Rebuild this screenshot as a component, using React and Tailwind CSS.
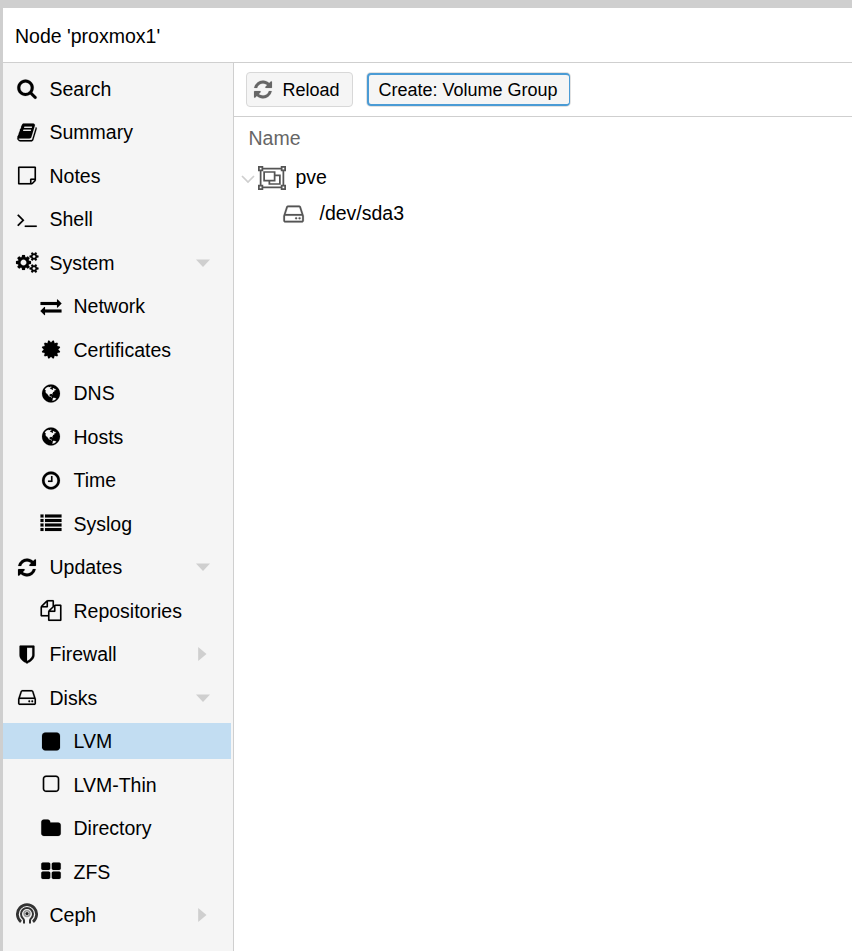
import React from 'react';

const box = (x, y, w, h) => `M${x} ${y}h${w}v${h}h-${w}z`;

const paths = {
  search: 'M1216 832q0-185-131.5-316.5t-316.5-131.5-316.5 131.5-131.5 316.5 131.5 316.5 316.5 131.5 316.5-131.5 131.5-316.5zm512 832q0 52-38 90t-90 38q-54 0-90-38l-343-342q-179 124-399 124-143 0-273.5-55.5t-225-150-150-225-55.5-273.5 55.5-273.5 150-225 225-150 273.5-55.5 273.5 55.5 225 150 150 225 55.5 273.5q0 220-124 399l343 343q37 37 37 90z',
  book: 'M1703 478q40 57 18 129l-275 906q-19 64-76.5 107.5t-122.5 43.5h-923q-77 0-148.5-53.5t-99.5-131.5q-24-67-2-127 0-4 3-27t4-37q1-8-3-21.5t-3-19.5q2-11 8-21t16.5-23.5 16.5-23.5q23-38 45-91.5t30-91.5q3-10 .5-30t-.5-28q3-11 17-28t17-23q21-36 42-92t25-90q1-9-2.5-32t.5-28q4-13 22-30.5t22-22.5q19-26 42.5-84.5t27.5-96.5q1-8-3-25.5t-2-26.5q2-8 9-18t18-23 17-21q8-12 16.5-30.5t15-35 16-36 19.5-32 26.5-23.5 36-11.5 47.5 5.5l-1 3q38-9 51-9h761q74 0 114 56t18 130l-274 906q-36 119-71.5 153.5t-128.5 34.5h-869q-27 0-38 15-11 16-1 43 24 70 144 70h923q29 0 56-15.5t35-41.5l300-987q7-22 5-57 38 15 59 43zm-1064 2q-4 13 2 22.5t20 9.5h608q13 0 25.5-9.5t16.5-22.5l21-64q4-13-2-22.5t-20-9.5h-608q-13 0-25.5 9.5t-16.5 22.5zm-83 256q-4 13 2 22.5t20 9.5h608q13 0 25.5-9.5t16.5-22.5l21-64q4-13-2-22.5t-20-9.5h-608q-13 0-25.5 9.5t-16.5 22.5z',
  note: 'M1528 1280h-248v248q29-10 41-22l185-185q12-12 22-41zm-280-128h288v-896h-1280v1280h896v-288q0-40 28-68t68-28zm416-928v1024q0 40-20 88t-48 76l-184 184q-28 28-76 48t-88 20h-1024q-40 0-68-28t-28-68v-1344q0-40 28-68t68-28h1344q40 0 68 28t28 68z',
  terminal: 'M649 983l-466 466q-10 10-23 10t-23-10l-50-50q-10-10-10-23t10-23l393-393-393-393q-10-10-10-23t10-23l50-50q10-10 23-10t23 10l466 466q10 10 10 23t-10 23zm1079 457v64q0 14-9 23t-23 9h-960q-14 0-23-9t-9-23v-64q0-14 9-23t23-9h960q14 0 23 9t9 23z',
  cogs: 'M896 896q0-106-75-181t-181-75-181 75-75 181 75 181 181 75 181-75 75-181zm768 512q0-52-38-90t-90-38-90 38-38 90q0 53 37.5 90.5t90.5 37.5 90.5-37.5 37.5-90.5zm0-1024q0-52-38-90t-90-38-90 38-38 90q0 53 37.5 90.5t90.5 37.5 90.5-37.5 37.5-90.5zm-384 421v185q0 10-7 19.5t-16 10.5l-155 24q-11 35-32 76 34 48 90 115 7 11 7 20 0 12-7 19-23 30-82.5 89.5t-78.5 59.5q-11 0-21-7l-115-90q-37 19-77 31-11 108-23 155-7 24-30 24h-186q-11 0-20-7.5t-10-17.5l-23-153q-34-10-75-31l-118 89q-7 7-20 7-11 0-21-8-144-133-144-160 0-9 7-19 10-14 41-53t47-61q-23-44-35-82l-152-24q-10-1-17-9.5t-7-19.5v-185q0-10 7-19.5t16-10.5l155-24q11-35 32-76-34-48-90-115-7-11-7-20 0-12 7-20 22-30 82-89t79-59q11 0 21 7l115 90q34-18 77-32 11-108 23-154 7-24 30-24h186q11 0 20 7.5t10 17.5l23 153q34 10 75 31l118-89q8-7 20-7 11 0 21 8 144 133 144 160 0 8-7 19-12 16-42 54t-45 60q23 48 34 82l152 23q10 2 17 10.5t7 19.5zm640 533v140q0 16-149 31-12 27-30 52 51 113 51 138 0 4-4 7-122 71-124 71-8 0-46-47t-52-68q-20 2-30 2t-30-2q-14 21-52 68t-46 47q-2 0-124-71-4-3-4-7 0-25 51-138-18-25-30-52-149-15-149-31v-140q0-16 149-31 13-29 30-52-51-113-51-138 0-4 4-7 4-2 35-20t59-34 30-16q8 0 46 46.5t52 67.5q20-2 30-2t30 2q51-71 92-112l6-2q4 0 124 70 4 3 4 7 0 25-51 138 17 23 30 52 149 15 149 31zm0-1024v140q0 16-149 31-12 27-30 52 51 113 51 138 0 4-4 7-122 71-124 71-8 0-46-47t-52-68q-20 2-30 2t-30-2q-14 21-52 68t-46 47q-2 0-124-71-4-3-4-7 0-25 51-138-18-25-30-52-149-15-149-31v-140q0-16 149-31 13-29 30-52-51-113-51-138 0-4 4-7 4-2 35-20t59-34 30-16q8 0 46 46.5t52 67.5q20-2 30-2t30 2q51-71 92-112l6-2q4 0 124 70 4 3 4 7 0 25-51 138 17 23 30 52 149 15 149 31z',
  exchange: 'M1792 1184v192q0 13-9.5 22.5t-22.5 9.5h-1376v192q0 13-9.5 22.5t-22.5 9.5q-12 0-24-10l-319-320q-9-9-9-22 0-14 9-23l320-320q9-9 23-9 13 0 22.5 9.5t9.5 22.5v192h1376q13 0 22.5 9.5t9.5 22.5zm0-544q0 14-9 23l-320 320q-9 9-23 9-13 0-22.5-9.5t-9.5-22.5v-192h-1376q-13 0-22.5-9.5t-9.5-22.5v-192q0-13 9.5-22.5t22.5-9.5h1376v-192q0-14 9-23t23-9q12 0 24 10l319 319q9 9 9 23z',
  certificate: 'M1504 896l138 135q30 28 20 70-12 41-52 51l-188 48 53 186q12 41-19 70-29 31-70 19l-186-53-48 188q-10 40-51 52-12 2-19 2-31 0-51-22l-135-138-135 138q-28 30-70 20-41-11-51-52l-48-188-186 53q-41 12-70-19-31-29-19-70l53-186-188-48q-40-10-52-51-10-42 20-70l138-135-138-135q-30-28-20-70 12-41 52-51l188-48-53-186q-12-41 19-70 29-31 70-19l186 53 48-188q10-41 51-51 41-12 70 19l135 139 135-139q29-30 70-19 41 10 51 51l48 188 186-53q41-12 70 19 31 29 19 70l-53 186 188 48q40 10 52 51 10 42-20 70z',
  globe: 'M896 128q209 0 385.5 103t279.5 279.5 103 385.5-103 385.5-279.5 279.5-385.5 103-385.5-103-279.5-279.5-103-385.5 103-385.5 279.5-279.5 385.5-103zm274 521q-2 1-9.5 9.5t-13.5 9.5q2 0 4.5-5t5-11 3.5-7q6-7 22-15 14-6 52-12 34-8 51 11-2-2 9.5-13t14.5-12q3-2 15-4.5t15-7.5l2-22q-12 1-17.5-7t-6.5-21q0 2-6 8 0-7-4.5-8t-11.5 1-9 1q-10-3-15-7.5t-8-16.5-4-15q-2-5-9.5-11t-9.5-10q-1-2-2.5-5.5t-3-6.5-4-5.5-5.5-2.5-7 5-7.5 10-4.5 5q-3-2-6-1.5t-4.5 1-4.5 3-5 3.5q-3 2-8.5 3t-8.5 2q15-5-1-11-10-4-16-3 9-4 7.5-12t-8.5-14h5q-1-4-8.5-8.5t-17.5-8.5-13-6q-8-5-34-9.5t-33-.5q-5 6-4.5 10.5t4 14 3.5 12.5q1 6-5.5 13t-6.5 12q0 7 14 15.5t10 21.5q-3 8-16 16t-16 12q-5 8-1.5 18.5t10.5 16.5q2 2 1.5 4t-3.5 4.5-5.5 4-6.5 3.5l-3 2q-11 5-20.5-6t-13.5-26q-7-25-16-30-23-8-29 1-5-13-41-26-25-9-58-4 6-1 0-15-7-15-19-12 3-6 4-17.5t1-13.5q3-13 12-23 1-1 7-8.5t9.5-13.5.5-6q35 4 50-11 5-5 11.5-17t10.5-17q9-6 14-5.5t14.5 5.5 14.5 5q14 1 15.5-11t-7.5-20q12 1 3-17-4-7-8-9-12-4-27 5-8 4 2 8-1-1-9.5 10.5t-16.5 17.5-16-5q-1-1-5.5-13.5t-9.5-13.5q-8 0-16 15 3-8-11-15t-24-8q19-12-8-27-7-4-20.5-5t-19.5 4q-5 7-5.5 11.5t5 8 10.5 5.5 11.5 4 8.5 3q14 10 8 14-2 1-8.5 3.5t-11.5 4.5-6 4q-3 4 0 14t-2 14q-5-5-9-17.5t-7-16.5q7 9-25 6l-10-1q-4 0-16 2t-20.5 1-13.5-8q-4-8 0-20 1-4 4-2-4-3-11-9.5t-10-8.5q-46 15-94 41 6 1 12-1 5-2 13-6.5t10-5.5q34-14 42-7l5-5q14 16 20 25-7-4-30-1-20 6-22 12 7 12 5 18-4-3-11.5-10t-14.5-11-15-5q-16 0-22 1-146 80-235 222 7 7 12 8 4 1 5 9t2.5 11 11.5-3q9 8 3 19 1-1 44 27 19 17 21 21 3 11-10 18-1-2-9-9t-9-4q-3 5 .5 18.5t10.5 12.5q-7 0-9.5 16t-2.5 35.5-1 23.5l2 1q-3 12 5.5 34.5t21.5 19.5q-13 3 20 43 6 8 8 9 3 2 12 7.5t15 10 10 10.5q4 5 10 22.5t14 23.5q-2 6 9.5 20t10.5 23q-1 0-2.5 1t-2.5 1q3 7 15.5 14t15.5 13q1 3 2 10t3 11 8 2q2-20-24-62-15-25-17-29-3-5-5.5-15.5t-4.5-14.5q2 0 6 1.5t8.5 3.5 7.5 4 2 3q-3 7 2 17.5t12 18.5 17 19 12 13q6 6 14 19.5t0 13.5q9 0 20 10t17 20q5 8 8 26t5 24q2 7 8.5 13.5t12.5 9.5l16 8 13 7q5 2 18.5 10.5t21.5 11.5q10 4 16 4t14.5-2.5 13.5-3.5q15-2 29 15t21 21q36 19 55 11-2 1 .5 7.5t8 15.5 9 14.5 5.5 8.5q5 6 18 15t18 15q6-4 7-9-3 8 7 20t18 10q14-3 14-32-31 15-49-18 0-1-2.5-5.5t-4-8.5-2.5-8.5 0-7.5 5-3q9 0 10-3.5t-2-12.5-4-13q-1-8-11-20t-12-15q-5 9-16 8t-16-9q0 1-1.5 5.5t-1.5 6.5q-13 0-15-1 1-3 2.5-17.5t3.5-22.5q1-4 5.5-12t7.5-14.5 4-12.5-4.5-9.5-17.5-2.5q-19 1-26 20-1 3-3 10.5t-5 11.5-9 7q-7 3-24 2t-24-5q-13-8-22.5-29t-9.5-37q0-10 2.5-26.5t3-25-5.5-24.5q3-2 9-9.5t10-10.5q2-1 4.5-1.5t4.5 0 4-1.5 3-6q-1-1-4-3-3-3-4-3 7 3 28.5-1.5t27.5 1.5q15 11 22-2 0-1-2.5-9.5t-.5-13.5q5 27 29 9 3 3 15.5 5t17.5 5q3 2 7 5.5t5.5 4.5 5-.5 8.5-6.5q10 14 12 24 11 40 19 44 7 3 11 2t4.5-9.5 0-14-1.5-12.5l-1-8v-18l-1-8q-15-3-18.5-12t1.5-18.5 15-18.5q1-1 8-3.5t15.5-6.5 12.5-8q21-19 15-35 7 0 11-9-1 0-5-3t-7.5-5-4.5-2q9-5 2-16 5-3 7.5-11t7.5-10q9 12 21 2 7-8 1-16 5-7 20.5-10.5t18.5-9.5q7 2 8-2t1-12 3-12q4-5 15-9t13-5l17-11q3-4 0-4 18 2 31-11 10-11-6-20 3-6-3-9.5t-15-5.5q3-1 11.5-.5t10.5-1.5q15-10-7-16-17-5-43 12zm-163 877q206-36 351-189-3-3-12.5-4.5t-12.5-3.5q-18-7-24-8 1-7-2.5-13t-8-9-12.5-8-11-7q-2-2-7-6t-7-5.5-7.5-4.5-8.5-2-10 1l-3 1q-3 1-5.5 2.5t-5.5 3-4 3 0 2.5q-21-17-36-22-5-1-11-5.5t-10.5-7-10-1.5-11.5 7q-5 5-6 15t-2 13q-7-5 0-17.5t2-18.5q-3-6-10.5-4.5t-12 4.5-11.5 8.5-9 6.5-8.5 5.5-8.5 7.5q-3 4-6 12t-5 11q-2-4-11.5-6.5t-9.5-5.5q2 10 4 35t5 38q7 31-12 48-27 25-29 40-4 22 12 26 0 7-8 20.5t-7 21.5q0 6 2 16z',
  clock: 'M1024 544v448q0 14-9 23t-23 9h-320q-14 0-23-9t-9-23v-64q0-14 9-23t23-9h224v-352q0-14 9-23t23-9h64q14 0 23 9t9 23zm416 352q0-148-73-273t-198-198-273-73-273 73-198 198-73 273 73 273 198 198 273 73 273-73 198-198 73-273zm224 0q0 209-103 385.5t-279.5 279.5-385.5 103-385.5-103-279.5-279.5-103-385.5 103-385.5 279.5-279.5 385.5-103 385.5 103 279.5 279.5 103 385.5z',
  list: [128, 512, 896, 1280].map((y) => box(0, y, 256, 256) + box(384, y, 1408, 256)).join(''),
  refresh: 'M1639 1056q0 5-1 7-64 268-268 434.5t-478 166.5q-146 0-282.5-55t-243.5-157l-129 129q-19 19-45 19t-45-19-19-45v-448q0-26 19-45t45-19h448q26 0 45 19t19 45-19 45l-137 137q71 66 161 102t187 36q134 0 250-65t186-179q11-17 53-117 8-23 30-23h192q13 0 22.5 9.5t9.5 22.5zm25-800v448q0 26-19 45t-45 19h-448q-26 0-45-19t-19-45 19-45l138-138q-148-137-349-137-134 0-250 65t-186 179q-11 17-53 117-8 23-30 23h-199q-13 0-22.5-9.5t-9.5-22.5v-7q65-268 270-434.5t480-166.5q146 0 284 55.5t245 156.5l130-129q19-19 45-19t45 19 19 45z',
  files: 'M1696 384q40 0 68 28t28 68v1216q0 40-28 68t-68 28h-960q-40 0-68-28t-28-68v-288h-544q-40 0-68-28t-28-68v-672q0-40 20-88t48-76l408-408q28-28 76-48t88-20h416q40 0 68 28t28 68v328q68-40 128-40h416zm-544 213l-299 299h299v-299zm-640-384l-299 299h299v-299zm196 647l316-316v-416h-384v416q0 40-28 68t-68 28h-416v640h512v-256q0-40 20-88t48-76zm956 804v-1152h-384v416q0 40-28 68t-68 28h-416v640h896z',
  shield: 'M1344 960v-640h-448v1137q119-63 213-137 235-184 235-360zm192-768v768q0 86-33.5 170.5t-83 150-118 127.5-126.5 103-121 77.5-89.5 49.5-42.5 20q-12 6-26 6t-26-6q-16-7-42.5-20t-89.5-49.5-121-77.5-126.5-103-118-127.5-83-150-33.5-170.5v-768q0-26 19-45t45-19h1152q26 0 45 19t19 45z',
  hdd: 'M1168 1216q0 33-23.5 56.5t-56.5 23.5-56.5-23.5-23.5-56.5 23.5-56.5 56.5-23.5 56.5 23.5 23.5 56.5zm256 0q0 33-23.5 56.5t-56.5 23.5-56.5-23.5-23.5-56.5 23.5-56.5 56.5-23.5 56.5 23.5 23.5 56.5zm112 160v-320q0-13-9.5-22.5t-22.5-9.5h-1216q-13 0-22.5 9.5t-9.5 22.5v320q0 13 9.5 22.5t22.5 9.5h1216q13 0 22.5-9.5t9.5-22.5zm-1230-480h1180l-157-482q-4-13-16-21.5t-26-8.5h-782q-14 0-26 8.5t-16 21.5zm1358 160v320q0 66-47 113t-113 47h-1216q-66 0-113-47t-47-113v-320q0-25 16-75l197-606q17-53 63-86t101-33h782q55 0 101 33t63 86l197 606q16 50 16 75z',
  square: 'M1664 416v960q0 119-84.5 203.5t-203.5 84.5h-960q-119 0-203.5-84.5t-84.5-203.5v-960q0-119 84.5-203.5t203.5-84.5h960q119 0 203.5 84.5t84.5 203.5z',
  squareOpen: 'M1312 256h-832q-66 0-113 47t-47 113v832q0 66 47 113t113 47h832q66 0 113-47t47-113v-832q0-66-47-113t-113-47zm288 160v832q0 119-84.5 203.5t-203.5 84.5h-832q-119 0-203.5-84.5t-84.5-203.5v-832q0-119 84.5-203.5t203.5-84.5h832q119 0 203.5 84.5t84.5 203.5z',
  folder: 'M1728 608v704q0 92-66 158t-158 66h-1216q-92 0-158-66t-66-158v-960q0-92 66-158t158-66h320q92 0 158 66t66 158v32h672q92 0 158 66t66 158z',
  grid: 'M832 1024v384q0 52-38 90t-90 38h-512q-52 0-90-38t-38-90v-384q0-52 38-90t90-38h512q52 0 90 38t38 90zm0-768v384q0 52-38 90t-90 38h-512q-52 0-90-38t-38-90v-384q0-52 38-90t90-38h512q52 0 90 38t38 90zm896 768v384q0 52-38 90t-90 38h-512q-52 0-90-38t-38-90v-384q0-52 38-90t90-38h512q52 0 90 38t38 90zm0-768v384q0 52-38 90t-90 38h-512q-52 0-90-38t-38-90v-384q0-52 38-90t90-38h512q52 0 90 38t38 90z',
};

function Icon({ name, className = 'h-[21px] w-[21px]' }) {
  return (
    <svg
      viewBox={name === 'cogs' ? '0 0 1920 1792' : '-43 0 1792 1792'}
      className={`${className} shrink-0 overflow-visible`}
      fill="currentColor"
      stroke="currentColor"
      strokeWidth="12"
    >
      <path d={paths[name]} />
    </svg>
  );
}

function CephIcon() {
  return (
    <svg viewBox="0 0 22 22" className="mb-[5px] h-[22px] w-[22px] shrink-0" fill="none" stroke="#333">
      <path d="M5 19.8A9.6 9.6 0 1 1 17 19.8" strokeWidth="2.8" />
      <path d="M8 21.5V18.6Q8 17.2 6.8 16.2A6 6 0 1 1 15.2 16.2Q14 17.2 14 18.6V21.5" strokeWidth="2" />
      <circle cx="11" cy="11.6" r="2.9" stroke="#999" strokeWidth="1.6" />
      <circle cx="11" cy="11.6" r="1.6" fill="#222" stroke="none" />
    </svg>
  );
}

function ObjectGroupIcon() {
  return (
    <svg viewBox="0 0 2048 1792" className="h-6 w-[28px] shrink-0" preserveAspectRatio="none" fill="none" stroke="#555" strokeWidth="128">
      <path d="M64 64h256v256H64zM1728 64h256v256h-256zM64 1472h256v256H64zM1728 1472h256v256h-256z" />
      <path d="M320 192h1408M320 1600h1408M192 320v1152M1856 320v1152" />
      <path d="M448 448h768v640H448zM1216 704h384v640H832v-256" />
    </svg>
  );
}

const items = [
  { label: 'Search', icon: 'search' },
  { label: 'Summary', icon: 'book' },
  { label: 'Notes', icon: 'note' },
  { label: 'Shell', icon: 'terminal' },
  { label: 'System', icon: 'cogs', arrow: 'down' },
  { label: 'Network', icon: 'exchange', child: true },
  { label: 'Certificates', icon: 'certificate', child: true },
  { label: 'DNS', icon: 'globe', child: true },
  { label: 'Hosts', icon: 'globe', child: true },
  { label: 'Time', icon: 'clock', child: true },
  { label: 'Syslog', icon: 'list', child: true },
  { label: 'Updates', icon: 'refresh', arrow: 'down' },
  { label: 'Repositories', icon: 'files', child: true },
  { label: 'Firewall', icon: 'shield', arrow: 'right' },
  { label: 'Disks', icon: 'hdd', arrow: 'down' },
  { label: 'LVM', icon: 'square', child: true, selected: true },
  { label: 'LVM-Thin', icon: 'squareOpen', child: true },
  { label: 'Directory', icon: 'folder', child: true },
  { label: 'ZFS', icon: 'grid', child: true },
  { label: 'Ceph', icon: 'ceph', arrow: 'right' },
];

function NavItem({ label, icon, child, arrow, selected }) {
  return (
    <li className="flex h-[43.5px] items-center">
      <div className={`flex h-9 w-[228px] items-center ${child ? 'pl-9' : 'pl-3'} ${selected ? 'bg-[#c2ddf2]' : ''}`}>
        <span className={`flex shrink-0 justify-center ${icon === 'ceph' ? 'mr-px w-6' : icon === 'cogs' ? 'mr-px w-6' : 'mr-[2px] w-[23px]'}`}>
          {icon === 'ceph' ? <CephIcon /> : <Icon name={icon} className={icon === 'cogs' ? 'h-[21px] w-[22.5px]' : 'h-[21px] w-[21px]'} />}
        </span>
        <span className="ml-[9.5px] flex-1">{label}</span>
        {arrow && (
          <svg viewBox="0 0 16 16" className="mr-5 h-4 w-4" fill="#cfcfcf">
            <path d={arrow === 'down' ? 'M1 4.5h14l-7 7.5z' : 'M3.2 1v14l8.3-7z'} />
          </svg>
        )}
      </div>
    </li>
  );
}

export default function App() {
  return (
    <div className="flex h-[951px] w-[852px] flex-col overflow-hidden border-l-[3px] border-t-8 border-[#cfcfcf] bg-white font-['Liberation_Sans',Arial,sans-serif] text-[19.5px] leading-6 text-black">
      <header className="flex h-[55px] shrink-0 items-center border-b border-[#cfcfcf] pl-3 pt-[2px]">Node 'proxmox1'</header>
      <div className="flex min-h-0 flex-1">
        <nav className="w-[231px] shrink-0 overflow-hidden border-r border-[#cfcfcf] bg-[#f5f5f5] pt-1">
          <ul>
            {items.map((item) => (
              <NavItem key={item.label} {...item} />
            ))}
          </ul>
        </nav>
        <main className="min-w-0 flex-1">
          <div className="flex h-[54px] items-center gap-[14px] border-b border-[#cfcfcf] pl-3 text-[18px]">
            <button className="flex h-[35px] w-[107px] items-center rounded border border-[#d8d8d8] bg-[#f5f5f5] pl-[5px]">
              <span className="text-[#666]"><Icon name="refresh" /></span>
              <span className="ml-[9.5px]">Reload</span>
            </button>
            <button className="flex h-[33px] w-[203px] items-center whitespace-nowrap rounded border-y-2 border-l-2 border-r border-[#4a9bd5] bg-[#f5f5f5] pl-[9.5px] shadow-[0_0_0_1px_#e2e2e2]">
              Create: Volume Group
            </button>
          </div>
          <div className="flex h-[42px] items-center pl-[14.5px] text-[#666]">Name</div>
          <div className="flex h-9 items-center pl-[7px]">
            <svg viewBox="0 0 14 14" className="mt-1 h-[14px] w-[14px]" fill="none" stroke="#cfcfcf" strokeWidth="1.7">
              <path d="M1 4l6 6 6-6" />
            </svg>
            <span className="ml-[3px] mt-[2px]"><ObjectGroupIcon /></span>
            <span className="ml-[9.5px]">pve</span>
          </div>
          <div className="flex h-9 items-center pl-[47px]">
            <span className="mt-[2px] text-[#555]"><Icon name="hdd" className="h-6 w-6" /></span>
            <span className="ml-[14.5px]">/dev/sda3</span>
          </div>
        </main>
      </div>
    </div>
  );
}
